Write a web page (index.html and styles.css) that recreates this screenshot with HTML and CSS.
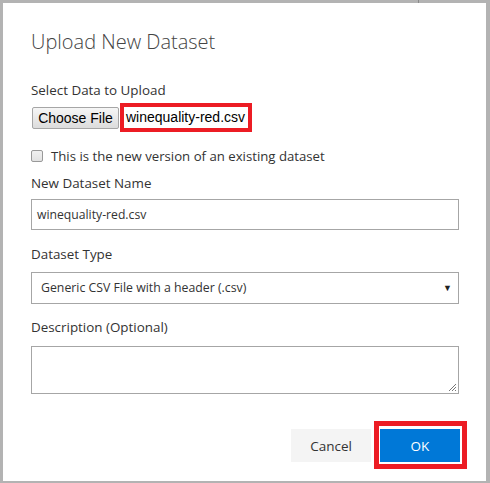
FILE: index.html
```html
<!DOCTYPE html>
<html>
<head>
<meta charset="utf-8">
<link rel="stylesheet" href="styles.css">
</head>
<body>
<div class="frame">
  <span class="tick"></span>
  <div class="dialog">
    <h1 class="title">Upload New Dataset</h1>
    <div class="label first">Select Data to Upload</div>
    <div class="file-row">
      <button class="choose">Choose File</button>
      <span class="filename">winequality-red.csv</span>
    </div>
    <label class="check-row"><span class="checkbox"></span><span>This is the new version of an existing dataset</span></label>
    <div class="label name-label">New Dataset Name</div>
    <div class="input">winequality-red.csv</div>
    <div class="label type-label">Dataset Type</div>
    <div class="select"><span>Generic CSV File with a header (.csv)</span><span class="arrow">&#9660;</span></div>
    <div class="label desc-label">Description (Optional)</div>
    <div class="textarea">
      <svg class="grip" width="10" height="10" viewBox="0 0 10 10"><path d="M9 2L2 9M9 5L5 9M9 8L8 9" stroke="#777" stroke-width="1"/></svg>
    </div>
    <div class="actions">
      <button class="btn cancel">Cancel</button>
      <div class="ok-wrap"><button class="btn ok">OK</button></div>
    </div>
  </div>
</div>
</body>
</html>
```

FILE: styles.css
```css
* { box-sizing: border-box; }
html, body { margin: 0; padding: 0; background: #fff; }
body { width: 490px; height: 483px; overflow: hidden; font-family: "Open Sans", "Noto Sans", sans-serif; color: #333; }
.frame {
  position: relative;
  width: 490px; height: 483px;
  border-style: solid; border-color: #b3b3b3;
  border-width: 3px 4px 2px 3px;
  background: #fff;
}
.tick { position: absolute; top: -3px; left: 415px; width: 1px; height: 3px; background: #8a8a8a; }
.dialog { display: flex; flex-direction: column; padding: 0 27px 0 28px; }
.title {
  margin: 24px 0 0 0; font-weight: 300; font-size: 20px; line-height: 30px;
  color: #444;
}
.label { font-size: 13.4px; line-height: 18px; color: #333; }
.label.first { margin-top: 24px; }
.file-row { display: flex; align-items: center; margin-top: 4px; height: 29px; }
.choose {
  width: 87px; height: 22px; margin: 0 1px 0 1px; padding: 0;
  font-family: "Liberation Sans", Arial, sans-serif; font-size: 14px; color: #000;
  background: linear-gradient(#f6f6f6, #dcdcdc);
  border: 1px solid #a6a6a6; border-radius: 2px;
}
.filename {
  height: 29px; width: 132px;
  border: 4px solid #ec1c24;
  font-family: "Liberation Sans", Arial, sans-serif; font-size: 14px; color: #000;
  line-height: 21px; padding-left: 2px; white-space: nowrap;
}
.check-row { display: flex; align-items: center; margin-top: 16px; font-size: 13.2px; line-height: 16px; height: 16px; }
.checkbox {
  width: 12px; height: 12px; border: 1px solid #999; border-radius: 2px;
  background: linear-gradient(#f0f0f0, #e2e2e2); margin-right: 8px;
}
.name-label { margin-top: 10px; }
.type-label { margin-top: 15px; }
.desc-label { margin-top: 14px; }
.input {
  margin-top: 7px; height: 31px; border: 1px solid #a6a6a6;
  font-size: 12.2px; line-height: 29px; padding-left: 5px;
}
.select {
  margin-top: 9px; height: 32px; border: 1px solid #a6a6a6;
  font-size: 12.3px; line-height: 30px; padding: 0 6px 0 9px;
  display: flex; justify-content: space-between;
}
.arrow { font-size: 9px; color: #222; }
.textarea {
  margin-top: 10px; height: 48px; border: 1px solid #a6a6a6; position: relative;
}
.grip { position: absolute; right: 1px; bottom: 1px; }
.actions { display: flex; justify-content: flex-end; align-items: flex-end; margin-top: 27px; margin-right: -8px; }
.btn {
  border: none; font-family: "Open Sans", "Noto Sans", sans-serif; font-size: 13.5px;
  height: 33px; width: 80px; padding: 0;
}
.cancel { background: #f4f4f4; color: #333; margin-right: 3px; margin-bottom: 7px; }
.ok-wrap { border: 5px solid #ec1c24; padding: 3px 2px 2px 1px; background: #fff; }
.ok { background: #0078d7; color: #fff; display: block; }
```
